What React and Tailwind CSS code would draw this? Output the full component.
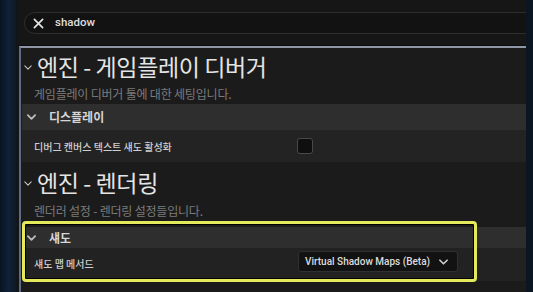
import React from "react";

const KR = { fontFamily: '"Noto Sans CJK KR", "Noto Sans", sans-serif' };
const RB = { fontFamily: 'Roboto, "Noto Sans", sans-serif' };

function Chevron({ className, sw = 1.6 }) {
  return (
    <svg viewBox="0 0 10 6" className={className} fill="none" stroke="currentColor" strokeWidth={sw} strokeLinecap="round" strokeLinejoin="round">
      <path d="M1 1 L5 5 L9 1" />
    </svg>
  );
}

function Heading({ children, h }) {
  return (
    <div className={`flex items-center pl-[3px] ${h}`}>
      <Chevron className="w-[8px] h-[5px] text-[#c8c8c8] mt-[2px]" sw={1.3} />
      <span className="ml-[5px] text-[23px] tracking-[-0.4px] text-[#e4e4e4] leading-none" style={KR}>
        {children}
      </span>
    </div>
  );
}

function Category({ children, h }) {
  return (
    <div className={`flex items-center ml-[1px] bg-[#2e2e2e] ${h}`}>
      <Chevron className="ml-[5px] w-[9px] h-[6px] text-[#bdbdbd]" sw={2} />
      <span className="ml-[13px] text-[12px] font-bold text-[#d6d6d6]" style={KR}>
        {children}
      </span>
    </div>
  );
}

export default function App() {
  return (
    <div className="w-[533px] h-[292px] flex overflow-hidden bg-[#0b1724]">
      <div className="w-[18px] h-full bg-gradient-to-r from-[#0a1420] via-[#10223a] to-[#101418]" />
      <div className="flex-1 flex flex-col bg-[#161616] overflow-hidden">
        <div className="h-[46px] shrink-0 pt-[12px] pl-[6px] border-b border-[#0c0c0c]">
          <div className="h-[22px] w-[560px] rounded-full border border-[#2e2e2e] bg-[#121212] flex items-center">
            <svg viewBox="0 0 12 12" className="ml-[8px] w-[11px] h-[11px] text-[#e6e6e6]" fill="none" stroke="currentColor" strokeWidth="1.8" strokeLinecap="round">
              <path d="M1.5 1.5 L10.5 10.5 M10.5 1.5 L1.5 10.5" />
            </svg>
            <span className="ml-[11px] text-[11.5px] font-medium text-[#dedede] leading-none" style={RB}>
              shadow
            </span>
          </div>
        </div>
        <div className="flex-1 ml-[1px] border-t-2 border-l-2 border-t-[#8f97a7] border-l-[#5e6d84] bg-[#1b1b1b] flex flex-col">
          <Heading h="h-[36px]">엔진 - 게임플레이 디버거</Heading>
          <div className="h-[20px] flex items-center pl-[13px] text-[12px] text-[#7c7c7c] tracking-[-0.2px]" style={KR}>
            게임플레이 디버거 툴에 대한 세팅입니다.
          </div>
          <Category h="h-[26px]">디스플레이</Category>
          <div className="h-[32px] ml-[1px] bg-[#232323] flex items-center">
            <span className="w-[275px] pl-[12px] text-[10px] font-medium text-[#cfcfcf]" style={KR}>
              디버그 캔버스 텍스트 섀도 활성화
            </span>
            <div className="w-[16px] h-[16px] rounded-[3px] border border-[#4a4a4a] bg-[#0f0f0f]" />
          </div>
          <Heading h="h-[40px]">엔진 - 렌더링</Heading>
          <div className="h-[18px] flex items-center pl-[13px] text-[12px] text-[#7c7c7c] tracking-[-0.2px]" style={KR}>
            렌더러 설정 - 렌더링 설정들입니다.
          </div>
          <div className="relative mt-[7px]">
            <Category h="h-[21px]">섀도</Category>
            <div className="h-[33px] ml-[1px] bg-[#222222] flex items-start">
              <span className="w-[276px] pl-[12px] pt-[8px] text-[10px] font-medium text-[#cfcfcf]" style={KR}>
                섀도 맵 메서드
              </span>
              <div className="mt-[3px] w-[160px] h-[21px] rounded-[3px] border border-[#303030] bg-[#121212] flex items-center pl-[6px]">
                <span className="text-[10px] font-medium text-[#dcdcdc] leading-none" style={RB}>
                  Virtual Shadow Maps (Beta)
                </span>
                <Chevron className="ml-[9px] w-[9px] h-[6px] text-[#d0d0d0]" sw={1.8} />
              </div>
            </div>
            <div className="absolute left-[1px] top-[-6px] w-[455px] h-[61px] rounded-[4px] border-[3px] border-[#e4ea5b] shadow-[inset_0_0_0_1px_#000]" />
          </div>
        </div>
      </div>
      <div className="w-[7px] h-full bg-[#0a1723]" />
    </div>
  );
}
